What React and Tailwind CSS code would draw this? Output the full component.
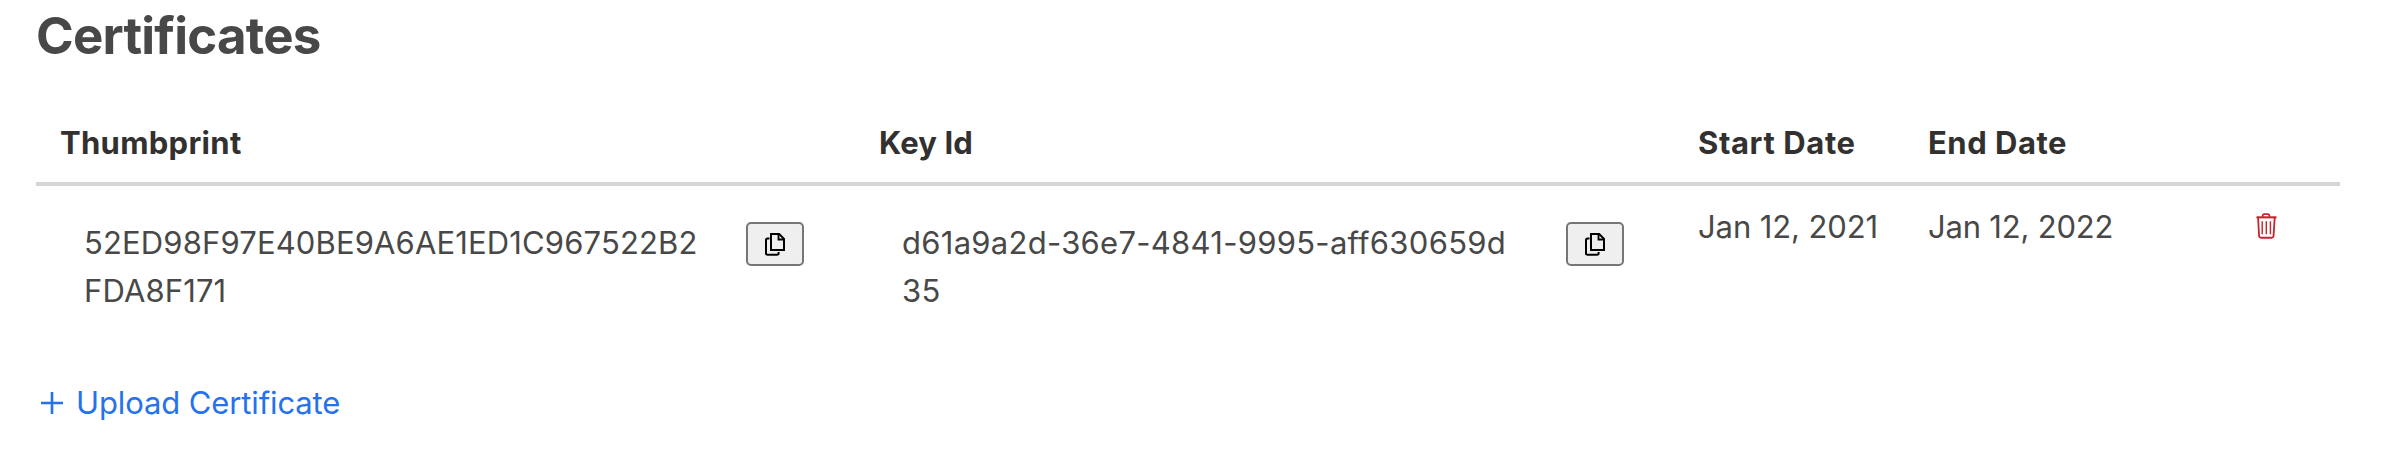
function CopyIcon() {
  return (
    <svg width="20" height="23" viewBox="0 0 20 23" fill="none" stroke="#000" strokeWidth="2">
      <path d="M6 1h8.2L19 5.8V17H6z" />
      <path d="M13.5 1v5.5H19" strokeWidth="1.8" />
      <path d="M4.5 5.5H2.6Q1 5.5 1 7.1V20.2Q1 21.8 2.6 21.8H12Q13.6 21.8 13.6 20.2V19" />
    </svg>
  );
}

function TrashIcon() {
  return (
    <svg width="21" height="26" viewBox="0 0 22 27" preserveAspectRatio="none" fill="none" stroke="#c4262e" strokeWidth="1.9">
      <path d="M0.5 4.5H21.5" strokeWidth="2.2" />
      <path d="M7 4V3Q7 1.2 8.8 1.2H12.2Q14 1.2 14 3V4" />
      <path d="M2.2 5L3.2 23.7Q3.3 25.7 5.2 25.7H16.4Q18.3 25.7 18.4 23.7L19.6 5" />
      <path d="M6.5 8.5V22M10.8 8.5V22M15.1 8.5V22" strokeWidth="1.5" />
    </svg>
  );
}

function CopyCell({ children, className }) {
  return (
    <div className="flex items-start pt-2">
      <div className={"shrink-0 pt-[25px] pl-6 " + className}>{children}</div>
      <button className="mt-7 flex h-11 w-[58px] shrink-0 items-center justify-center rounded-[5px] border-2 border-[#767676] bg-[#efefef]">
        <CopyIcon />
      </button>
    </div>
  );
}

export default function App() {
  return (
    <main className="flex h-[452px] w-[2384px] flex-col overflow-hidden bg-white pl-9 font-['Inter','Liberation_Sans',sans-serif] text-[31px] leading-[48px] text-[#484848]">
      <h2 className="mt-1 h-16 text-[51px] leading-[64px] font-bold tracking-[-0.8px]">Certificates</h2>
      <section className="mt-[50px] w-[2304px]">
        <div className="grid h-[68px] grid-cols-[818px_820px_230px_1fr] border-b-4 border-[#d6d6d6] pt-px pl-6 font-bold text-[#323130]">
          <div className="tracking-[0.3px]">Thumbprint</div>
          <div className="pl-px tracking-[0.1px]">Key Id</div>
          <div className="tracking-[0.6px]">Start Date</div>
          <div className="tracking-[0.5px]">End Date</div>
        </div>
        <div className="grid h-[164px] grid-cols-[818px_820px_230px_328px_1fr] pl-6">
          <CopyCell className="w-[686px]">
            <span className="block tracking-[0.14px]">52ED98F97E40BE9A6AE1ED1C967522B2</span>
            <span className="block tracking-[0.14px]">FDA8F171</span>
          </CopyCell>
          <CopyCell className="w-[688px]">
            <span className="block tracking-[0.28px]">d61a9a2d-36e7-4841-9995-aff630659d</span>
            <span className="block tracking-[0.28px]">35</span>
          </CopyCell>
          <div className="pt-[17px] tracking-[-0.1px]">Jan 12, 2021</div>
          <div className="pt-[17px] tracking-[-0.2px]">Jan 12, 2022</div>
          <div className="pt-[27px]"><TrashIcon /></div>
        </div>
      </section>
      <button className="mt-[29px] flex h-12 items-center pl-[5px] text-left text-[#2672ec]">
        <svg width="22" height="22" viewBox="0 0 22 22" fill="none" stroke="currentColor" strokeWidth="2.6">
          <path d="M11 0V22M0 11H22" />
        </svg>
        <span className="ml-[13px] tracking-[-0.12px]">Upload Certificate</span>
      </button>
    </main>
  );
}
